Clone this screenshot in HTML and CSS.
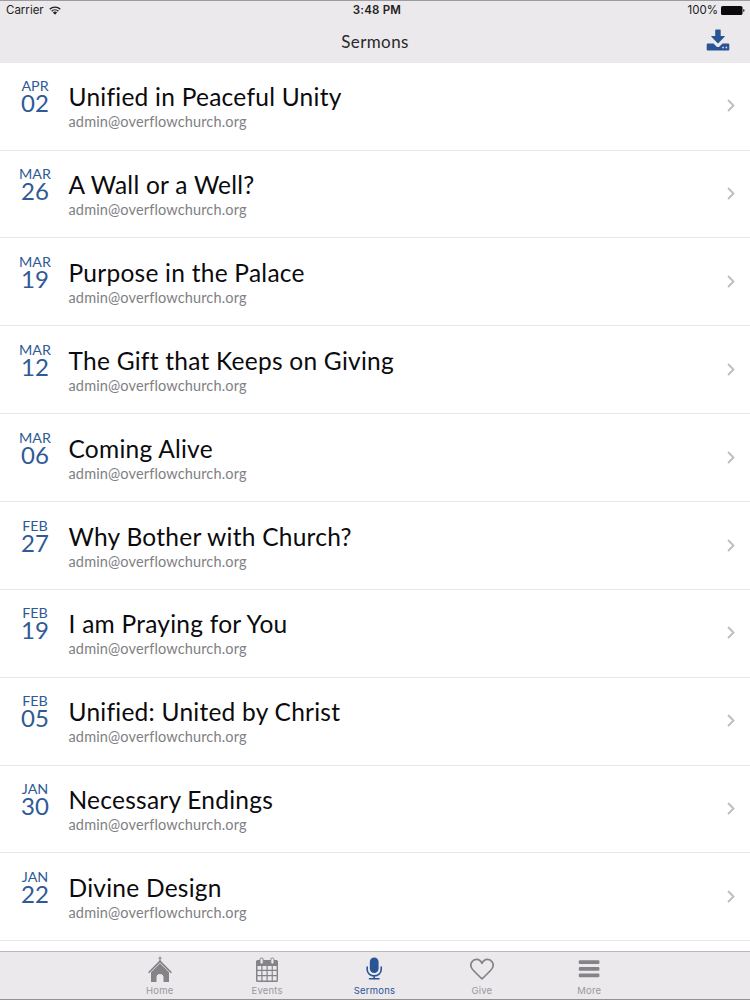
FILE: index.html
```html
<!DOCTYPE html>
<html lang="en">
<head>
  <meta charset="UTF-8" />
  <meta name="viewport" content="width=device-width, initial-scale=1" />
  <title>Sermons</title>
  <link rel="stylesheet" href="styles.css">
</head>
<body>
  <header>
    <div class="status-bar">
      <div class="carrier">
        <span>Carrier</span>
        <svg class="wifi" viewBox="0 0 12 9">
          <path d="M.7 3.3a7.6 7.6 0 0 1 10.6 0M2.6 5.2a4.9 4.9 0 0 1 6.8 0" fill="none" stroke="#222" stroke-width="1.4"/>
          <path d="M3.9 6.6a3 3 0 0 1 4.2 0L6 8.8z" fill="#222"/>
        </svg>
      </div>
      <div class="time">3:48 PM</div>
      <div class="battery">
        <span>100%</span>
        <svg class="battery-icon" viewBox="0 0 24 9">
          <rect x="0" y="0" width="21.5" height="9" rx="1.6" fill="#0a0a0a"/>
          <path d="M22.3 3c1.6.4 1.6 2.6 0 3z" fill="#0a0a0a"/>
        </svg>
      </div>
    </div>
    <div class="title-bar">
      <h1>Sermons</h1>
      <svg class="download" viewBox="0 0 24 22">
        <path d="M9.2 1.2Q9.2.5 10 .5h4Q14.7.5 14.7 1.2V7h3.6q1 0 .3.8l-6 6.2q-.6.6-1.2 0l-6-6.2Q4.8 7 5.7 7h3.5z"/>
        <path d="M1.7 14.5h5.8l3 2.9q1.5 1.3 3 0l3-2.9h5.8q1 0 1 1v5q0 1-1 1H1.7q-1 0-1-1v-5q0-1 1-1z"/>
        <path d="M16.3 18.5h1.5M19.6 18.5h1.5" stroke="#ebe9ec" stroke-width="1.5"/>
      </svg>
    </div>
  </header>

  <main>
    <a class="sermon">
      <div class="date"><span class="month">APR</span><span class="day">02</span></div>
      <div class="info"><h2>Unified in Peaceful Unity</h2><p>admin@overflowchurch.org</p></div>
      <svg class="chevron" viewBox="0 0 8 13"><path d="M1 1l5.5 5.5L1 12"/></svg>
    </a>
    <a class="sermon">
      <div class="date"><span class="month">MAR</span><span class="day">26</span></div>
      <div class="info"><h2>A Wall or a Well?</h2><p>admin@overflowchurch.org</p></div>
      <svg class="chevron" viewBox="0 0 8 13"><path d="M1 1l5.5 5.5L1 12"/></svg>
    </a>
    <a class="sermon">
      <div class="date"><span class="month">MAR</span><span class="day">19</span></div>
      <div class="info"><h2>Purpose in the Palace</h2><p>admin@overflowchurch.org</p></div>
      <svg class="chevron" viewBox="0 0 8 13"><path d="M1 1l5.5 5.5L1 12"/></svg>
    </a>
    <a class="sermon">
      <div class="date"><span class="month">MAR</span><span class="day">12</span></div>
      <div class="info"><h2>The Gift that Keeps on Giving</h2><p>admin@overflowchurch.org</p></div>
      <svg class="chevron" viewBox="0 0 8 13"><path d="M1 1l5.5 5.5L1 12"/></svg>
    </a>
    <a class="sermon">
      <div class="date"><span class="month">MAR</span><span class="day">06</span></div>
      <div class="info"><h2>Coming Alive</h2><p>admin@overflowchurch.org</p></div>
      <svg class="chevron" viewBox="0 0 8 13"><path d="M1 1l5.5 5.5L1 12"/></svg>
    </a>
    <a class="sermon">
      <div class="date"><span class="month">FEB</span><span class="day">27</span></div>
      <div class="info"><h2>Why Bother with Church?</h2><p>admin@overflowchurch.org</p></div>
      <svg class="chevron" viewBox="0 0 8 13"><path d="M1 1l5.5 5.5L1 12"/></svg>
    </a>
    <a class="sermon">
      <div class="date"><span class="month">FEB</span><span class="day">19</span></div>
      <div class="info"><h2>I am Praying for You</h2><p>admin@overflowchurch.org</p></div>
      <svg class="chevron" viewBox="0 0 8 13"><path d="M1 1l5.5 5.5L1 12"/></svg>
    </a>
    <a class="sermon">
      <div class="date"><span class="month">FEB</span><span class="day">05</span></div>
      <div class="info"><h2>Unified: United by Christ</h2><p>admin@overflowchurch.org</p></div>
      <svg class="chevron" viewBox="0 0 8 13"><path d="M1 1l5.5 5.5L1 12"/></svg>
    </a>
    <a class="sermon">
      <div class="date"><span class="month">JAN</span><span class="day">30</span></div>
      <div class="info"><h2>Necessary Endings</h2><p>admin@overflowchurch.org</p></div>
      <svg class="chevron" viewBox="0 0 8 13"><path d="M1 1l5.5 5.5L1 12"/></svg>
    </a>
    <a class="sermon">
      <div class="date"><span class="month">JAN</span><span class="day">22</span></div>
      <div class="info"><h2>Divine Design</h2><p>admin@overflowchurch.org</p></div>
      <svg class="chevron" viewBox="0 0 8 13"><path d="M1 1l5.5 5.5L1 12"/></svg>
    </a>
  </main>

  <nav>
    <a class="tab">
      <svg viewBox="0 0 26 28">
        <path d="M13 .5v6M11.5 2.3h3" fill="none" stroke="currentColor" stroke-width="1.1"/>
        <path d="M13 4l12 12.2-1.2 1.1L13 6.5 2.2 17.3 1 16.2z"/>
        <path d="M13 7.3l9 9V26h-5.5v-4.500a3.500 3.500 0 0 0-7 0V26H4v-9.700z"/>
      </svg>
      <span>Home</span>
    </a>
    <a class="tab">
      <svg viewBox="0 0 26 28">
        <path fill-rule="evenodd" d="M3.5 4h19q1.500 0 1.500 1.500v19q0 1.500-1.500 1.500h-19Q2 26 2 24.500v-19Q2 4 3.500 4zM3.500 10v3.800h3.800V10zm5 0v3.800h4V10zm5.200 0v3.800h4V10zm5.100 0v3.800h3.800V10zM3.500 15.100v3.900h3.800v-3.900zm5 0v3.900h4v-3.900zm5.200 0v3.900h4v-3.900zm5.100 0v3.900h3.800v-3.900zM3.500 20.300v4.200h3.800v-4.200zm5 0v4.200h4v-4.200zm5.200 0v4.200h4v-4.200zm5.100 0v4.200h3.800v-4.200z"/>
        <rect x="6" y="2" width="3.2" height="6" rx="1.5" fill="#ebe9ec" stroke="currentColor"/>
        <rect x="16.8" y="2" width="3.2" height="6" rx="1.5" fill="#ebe9ec" stroke="currentColor"/>
      </svg>
      <span>Events</span>
    </a>
    <a class="tab active">
      <svg viewBox="0 0 26 28">
        <rect x="8.8" y="1.5" width="8.8" height="15.5" rx="4.4"/>
        <path d="M6.2 11v2.700a7 6.200 0 0 0 14 0V11M13.200 20v3M8.500 22.800h9.500" fill="none" stroke="currentColor" stroke-width="1.6" stroke-linecap="round"/>
      </svg>
      <span>Sermons</span>
    </a>
    <a class="tab">
      <svg viewBox="0 0 26 28">
        <path d="M13 22.800Q11.500 21.700 4.500 14.500C1.700 11.700 1.200 8.500 2.800 6 5 2.700 10.500 2 13 7.300 15.500 2 21 2.700 23.200 6 24.800 8.500 24.300 11.700 21.500 14.500 14.500 21.700 13 22.800 13 22.800z" fill="none" stroke="currentColor" stroke-width="1.7" stroke-linejoin="round"/>
      </svg>
      <span>Give</span>
    </a>
    <a class="tab">
      <svg viewBox="0 0 26 28">
        <rect x="2.8" y="4.2" width="20.6" height="3.8" rx="1"/>
        <rect x="2.8" y="11" width="20.6" height="3.8" rx="1"/>
        <rect x="2.8" y="17.500" width="20.6" height="3.8" rx="1"/>
      </svg>
      <span>More</span>
    </a>
  </nav>
</body>
</html>
```
FILE: styles.css
```css
* {
  box-sizing: border-box;
}
html, body {
  margin: 0;
  padding: 0;
  height: 100%;
  overflow: hidden;
}
body {
  display: flex;
  flex-direction: column;
  background: #fff;
  font-family: Lato, 'Liberation Sans', sans-serif;
  color: #0b0b0d;
}
h1, h2, p {
  margin: 0;
  font-weight: normal;
}
header {
  flex: none;
  height: 62.8px;
  background: #ebe9ec;
  border-top: 1px solid #9d9b9f;
}
.status-bar {
  display: grid;
  grid-template-columns: 1fr auto 1fr;
  align-items: center;
  height: 18px;
  padding: 0 5px 0 6px;
  font: 11.5px/18px Inter, 'Liberation Sans', sans-serif;
  color: #222;
}
.carrier, .battery {
  display: flex;
  align-items: center;
  gap: 5px;
}
.battery {
  justify-content: flex-end;
  gap: 3px;
}
.time {
  font-weight: 600;
  letter-spacing: 0.2px;
  padding-left: 3px;
}
.wifi {
  width: 12px;
  height: 9px;
}
.battery-icon {
  width: 24px;
  height: 9px;
}
.title-bar {
  display: grid;
  grid-template-columns: 1fr auto 1fr;
  align-items: center;
  height: 43px;
  padding: 0 20px;
}
.title-bar h1 {
  grid-column: 2;
  padding-top: 1px;
  font-size: 17px;
  letter-spacing: 0.4px;
  color: #29282b;
}
.download {
  justify-self: end;
  width: 24px;
  height: 22px;
  margin-top: -2px;
  fill: #2a5595;
}
main {
  flex: 1;
  min-height: 0;
  overflow: hidden;
}
.sermon {
  display: flex;
  align-items: flex-start;
  height: 87.85px;
  padding: 16.5px 15px 0 15px;
  border-bottom: 1px solid #e6e6e8;
}
.date {
  display: flex;
  flex-direction: column;
  align-items: center;
  width: 40px;
  color: #2f5a96;
}
.month {
  font-size: 14.3px;
  line-height: 14px;
}
.day {
  font-size: 24px;
  line-height: 19px;
}
.info {
  flex: 1;
  padding: 3px 0 0 13.5px;
}
.info h2 {
  font-size: 24.5px;
  line-height: 29px;
  letter-spacing: 0.25px;
}
.info p {
  padding-top: 1px;
  font-size: 14.5px;
  line-height: 19px;
  letter-spacing: 0.15px;
  color: #808083;
}
.chevron {
  width: 8px;
  height: 13px;
  margin-top: 20px;
  fill: none;
  stroke: #bcbcc0;
  stroke-width: 1.8;
}
nav {
  flex: none;
  display: flex;
  justify-content: center;
  height: 49px;
  background: #ebe9ec;
  border-top: 1px solid #bab9bc;
  border-bottom: 1px solid #929194;
}
.tab {
  display: flex;
  flex-direction: column;
  align-items: center;
  width: 107.4px;
  padding: 4px 1px 0 0;
  color: #848387;
}
.tab svg {
  width: 26px;
  height: 28px;
  fill: currentColor;
}
.tab span {
  font: 9.5px/14px Inter, 'Liberation Sans', sans-serif;
  color: #99989c;
  letter-spacing: 0.2px;
}
.tab.active, .tab.active span {
  color: #2a5595;
}
```
